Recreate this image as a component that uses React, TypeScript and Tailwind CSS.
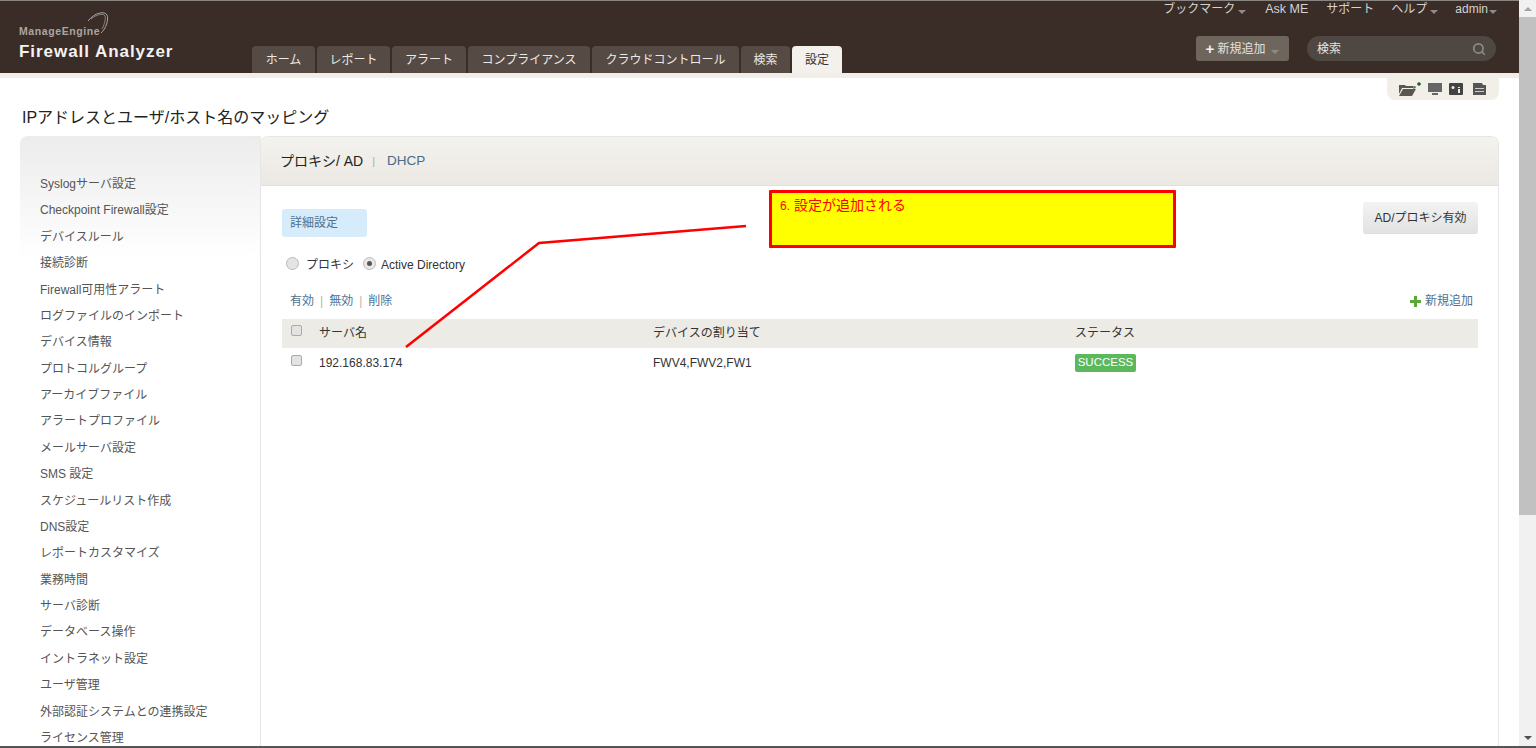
import { Search } from "lucide-react";

const font = "font-['Liberation_Sans','Noto_Sans_CJK_JP',sans-serif]";

const tabs = [
  { label: "ホーム", w: "w-[63px]" },
  { label: "レポート", w: "w-[73px]" },
  { label: "アラート", w: "w-[74px]" },
  { label: "コンプライアンス", w: "w-[122px]" },
  { label: "クラウドコントロール", w: "w-[147px]" },
  { label: "検索", w: "w-[49px]" },
];

const menu = [
  "Syslogサーバ設定",
  "Checkpoint Firewall設定",
  "デバイスルール",
  "接続診断",
  "Firewall可用性アラート",
  "ログファイルのインポート",
  "デバイス情報",
  "プロトコルグループ",
  "アーカイブファイル",
  "アラートプロファイル",
  "メールサーバ設定",
  "SMS 設定",
  "スケジュールリスト作成",
  "DNS設定",
  "レポートカスタマイズ",
  "業務時間",
  "サーバ診断",
  "データベース操作",
  "イントラネット設定",
  "ユーザ管理",
  "外部認証システムとの連携設定",
  "ライセンス管理",
];

const Caret = () => (
  <span className="ml-[3px] inline-block h-0 w-0 translate-y-[1px] border-x-[4px] border-t-[4px] border-x-transparent border-t-[#8f8a85]" />
);

const Header = () => (
  <header className="relative h-[73px] shrink-0 border-t border-[#8a8582] bg-[#3a2d27]">
    <div className="flex h-full">
      <div className="w-[252px] shrink-0 pl-[19px] pt-[19px]">
        <div className="relative h-[22px] text-[10.5px] font-bold leading-[22px] tracking-[0.6px] text-[#aaa5a1]">
          ManageEngine
          <svg className="absolute left-[66px] top-[-8px]" width="44" height="24" viewBox="0 0 44 24" fill="none" stroke="#a9a4a0">
            <path d="M3 9C10 0 20-1 22 3c2 4-1 14-6 18" strokeWidth="1" />
            <path d="M6 7c6-5 13-6 14-3 1 3-1 10-3 13" strokeWidth="0.7" />
          </svg>
        </div>
        <div className="text-[17px] font-bold leading-[20px] tracking-[0.95px] text-[#f4f2f0]">Firewall Analyzer</div>
      </div>
      <nav className="flex items-end gap-[2px]">
        {tabs.map((t) => (
          <div key={t.label} className={`${t.w} flex h-[27px] items-center justify-center rounded-t-[4px] bg-[#554a44] text-[12px] text-[#ece9e6]`}>
            {t.label}
          </div>
        ))}
        <div className="flex h-[27px] w-[50px] items-center justify-center rounded-t-[4px] bg-[#f4f1ec] text-[12px] text-[#333]">
          設定
        </div>
      </nav>
      <div className="ml-auto flex w-[340px] shrink-0 flex-col items-end pr-[22px]">
        <div className="flex h-[16px] items-center gap-[18px] whitespace-nowrap text-[12px] text-[#d5d2cf]">
          <span className="mr-[1px]">ブックマーク<Caret /></span>
          <span className="text-[12.5px]">Ask ME</span>
          <span className="-mr-[1px]">サポート</span>
          <span className="-mr-[1px]">ヘルプ<Caret /></span>
          <span>admin<span className="-ml-[2px] inline-block"><Caret /></span></span>
        </div>
        <div className="mr-[1px] mt-[19px] flex items-center gap-[18px]">
          <div className="flex h-[25px] w-[93px] items-center justify-center rounded-[3px] bg-[#6e655d] text-[12px] text-[#e4e1de]">
            <span className="mr-[3px] text-[15px] font-bold leading-none text-[#f2f0ee]">+</span>新規追加<span className="ml-[3px]"><Caret /></span>
          </div>
          <div className="flex h-[25px] w-[189px] items-center justify-between rounded-full bg-[#4f4741] pl-[10px] pr-[10px] text-[12px] text-[#e6e3e0]">
            検索
            <Search size={14} strokeWidth={3} className="text-[#8d8782]" />
          </div>
        </div>
      </div>
    </div>
  </header>
);

const Toolbar = () => (
  <div className="absolute right-[20px] top-[78px] flex h-[22px] w-[112px] items-center rounded-b-[8px] bg-[#f2efe9] pl-[12px]">
    <svg width="22" height="14" viewBox="0 0 22 14">
      <path d="M0 3h6l1 1h8l-1 2H3L0 12zM4 7h13l-4 7H0z" fill="#5a5650" />
      <path d="M14 6l2-2 1 1-2 2z" fill="#2f6b2f" />
      <circle cx="20" cy="2" r="1.800" fill="#1f5f1f" />
    </svg>
    <svg width="14" height="12" viewBox="0 0 14 12" fill="#666" className="ml-[7px]">
      <path d="M0 0h14v9H0zM4 10h6v2H4z" />
    </svg>
    <svg width="14" height="12" viewBox="0 0 14 12" className="ml-[7px]">
      <path d="M1 0h12a1 1 0 0 1 1 1v10a1 1 0 0 1-1 1H1a1 1 0 0 1-1-1V1a1 1 0 0 1 1-1z" fill="#444" />
      <circle cx="4" cy="4.500" r="1.500" fill="#eee" />
      <path d="M9 4h2v1H9zM9 6h2v4H9z" fill="#eee" />
    </svg>
    <svg width="13" height="12" viewBox="0 0 13 12" className="ml-[10px]">
      <path d="M0 0h9l1 2h3v10H0z" fill="#555" />
      <path d="M2 5h9v1H2zM2 8h9v1H2z" fill="#ccc" />
    </svg>
  </div>
);

const Sidebar = () => (
  <aside className="h-[620px] w-[241px] shrink-0 rounded-tl-[8px] bg-gradient-to-b from-[#ececec] to-white to-[20%] pl-[20px] pt-[35px]">
    <ul>
      {menu.map((m) => (
        <li key={m} className="h-[26.38px] whitespace-nowrap text-[12px] leading-[26.38px] text-[#555]">
          {m}
        </li>
      ))}
    </ul>
  </aside>
);

const Checkbox = () => (
  <span className="inline-block h-[11px] w-[11px] rounded-[2px] border border-[#aaa] bg-[#e3e3e3]" />
);

const Panel = () => (
  <section className="-ml-[1px] h-[620px] w-[1239px] shrink-0 rounded-t-[8px] border-x border-t border-[#e6e6e6] bg-white">
    <div className="flex h-[49px] items-center rounded-t-[8px] border-b border-[#e2dfd9] bg-gradient-to-b from-[#f4f2ee] to-[#ece9e4] pl-[19px] text-[14px]">
      <span className="text-[#222]">プロキシ/ AD</span>
      <span className="mx-[9px] text-[11px] text-[#aaa]">|</span>
      <span className="ml-[3px] text-[13.5px] text-[#4a6a8a]">DHCP</span>
    </div>
    <div className="pl-[21px] pr-[20px] pt-[16px]">
      <div className="flex items-start justify-between">
        <div className="mt-[7px] flex h-[28px] w-[85px] items-center rounded-[3px] bg-[#d6ecfb] pl-[8px] text-[12px] text-[#4f6f8f]">
          詳細設定
        </div>
        <div className="flex h-[32px] w-[115px] items-center justify-center rounded-[3px] border-b border-[#ddd] bg-gradient-to-b from-[#f3f3f3] to-[#e2e2e2] text-[12px] text-[#333]">
          AD/プロキシ有効
        </div>
      </div>
      <div className="mt-[18px] flex h-[20px] items-center text-[12px] text-[#333]">
        <span className="ml-[4px] inline-block h-[13px] w-[13px] -translate-y-[2px] rounded-full border border-[#bbb] bg-[#e4e4e4]" />
        <span className="ml-[7px]">プロキシ</span>
        <span className="ml-[9px] flex h-[13px] w-[13px] -translate-y-[2px] items-center justify-center rounded-full border border-[#bbb] bg-[#e8e8e8]">
          <span className="h-[5px] w-[5px] rounded-full bg-[#555]" />
        </span>
        <span className="ml-[5px]">Active Directory</span>
      </div>
      <div className="mt-[16px] flex h-[20px] items-center justify-between pl-[8px] pr-[5px] text-[12px] text-[#4f6f8f]">
        <div className="flex items-center">
          有効<span className="mx-[6px] text-[#b5b5b5]">|</span>無効<span className="mx-[6px] text-[#b5b5b5]">|</span>削除
        </div>
        <div className="flex items-center gap-[4px]">
          <svg width="11" height="11" viewBox="0 0 11 11" fill="#5aa83a">
            <path d="M4 0h3v4h4v3H7v4H4V7H0V4h4z" />
          </svg>
          新規追加
        </div>
      </div>
      <div className="mt-[8px] flex h-[29px] items-center bg-[#ecebe6] pb-[1px] pl-[9px] text-[12px] text-[#333]">
        <span className="-translate-y-[1px]"><Checkbox /></span>
        <span className="ml-[17px] w-[334px]">サーバ名</span>
        <span className="w-[422px]">デバイスの割り当て</span>
        <span>ステータス</span>
      </div>
      <div className="flex h-[30px] items-center pl-[9px] text-[12px] text-[#333]">
        <span className="-translate-y-[1px]"><Checkbox /></span>
        <span className="ml-[17px] w-[334px]">192.168.83.174</span>
        <span className="w-[422px]">FWV4,FWV2,FW1</span>
        <span className="flex h-[18px] w-[61px] items-center justify-center rounded-[2px] bg-[#5cb85c] text-[11.5px] text-white">SUCCESS</span>
      </div>
    </div>
  </section>
);

const Annotation = () => (
  <>
    <svg className="absolute left-0 top-0" width="1519" height="748" fill="none" stroke="#ff0000" strokeWidth="2.500">
      <path d="M406 347 539 243 746 226" />
    </svg>
    <div className="absolute left-[769px] top-[190px] h-[58px] w-[407px] rounded-[1px] border-[3px] border-[#ff0000] bg-[#ffff00] pl-[8px] pt-[1px] text-[14px] leading-[22px] text-[#ff0000]">
      <span className="text-[12px]">6.</span> 設定が追加される
    </div>
  </>
);

const Scrollbar = () => (
  <div className="flex w-[17px] shrink-0 flex-col bg-[#f1f1f1]">
    <div className="flex h-[17px] items-center justify-center">
      <span className="h-0 w-0 border-x-[4px] border-b-[4px] border-x-transparent border-b-[#a3a3a3]" />
    </div>
    <div className="h-[498px] bg-[#c1c1c1]" />
    <div className="mt-auto flex h-[17px] items-center justify-center">
      <span className="h-0 w-0 border-x-[4px] border-t-[4px] border-x-transparent border-t-[#505050]" />
    </div>
  </div>
);

export default function App() {
  return (
    <div className={`${font} h-[748px] overflow-hidden border-b-2 border-[#555] bg-white`}>
      <div className="flex h-[746px]">
        <div className="relative min-w-0 flex-1 overflow-hidden">
          <Header />
          <div className="h-[5px] bg-[#f1eee8]" />
          <Toolbar />
          <main className="pl-[20px]">
            <h1 className="ml-[2px] pt-[29px] text-[16px] font-normal leading-[22px] text-[#222]">
              IPアドレスとユーザ/ホスト名のマッピング
            </h1>
            <div className="mt-[7px] flex">
              <Sidebar />
              <Panel />
            </div>
          </main>
          <Annotation />
        </div>
        <Scrollbar />
      </div>
    </div>
  );
}
